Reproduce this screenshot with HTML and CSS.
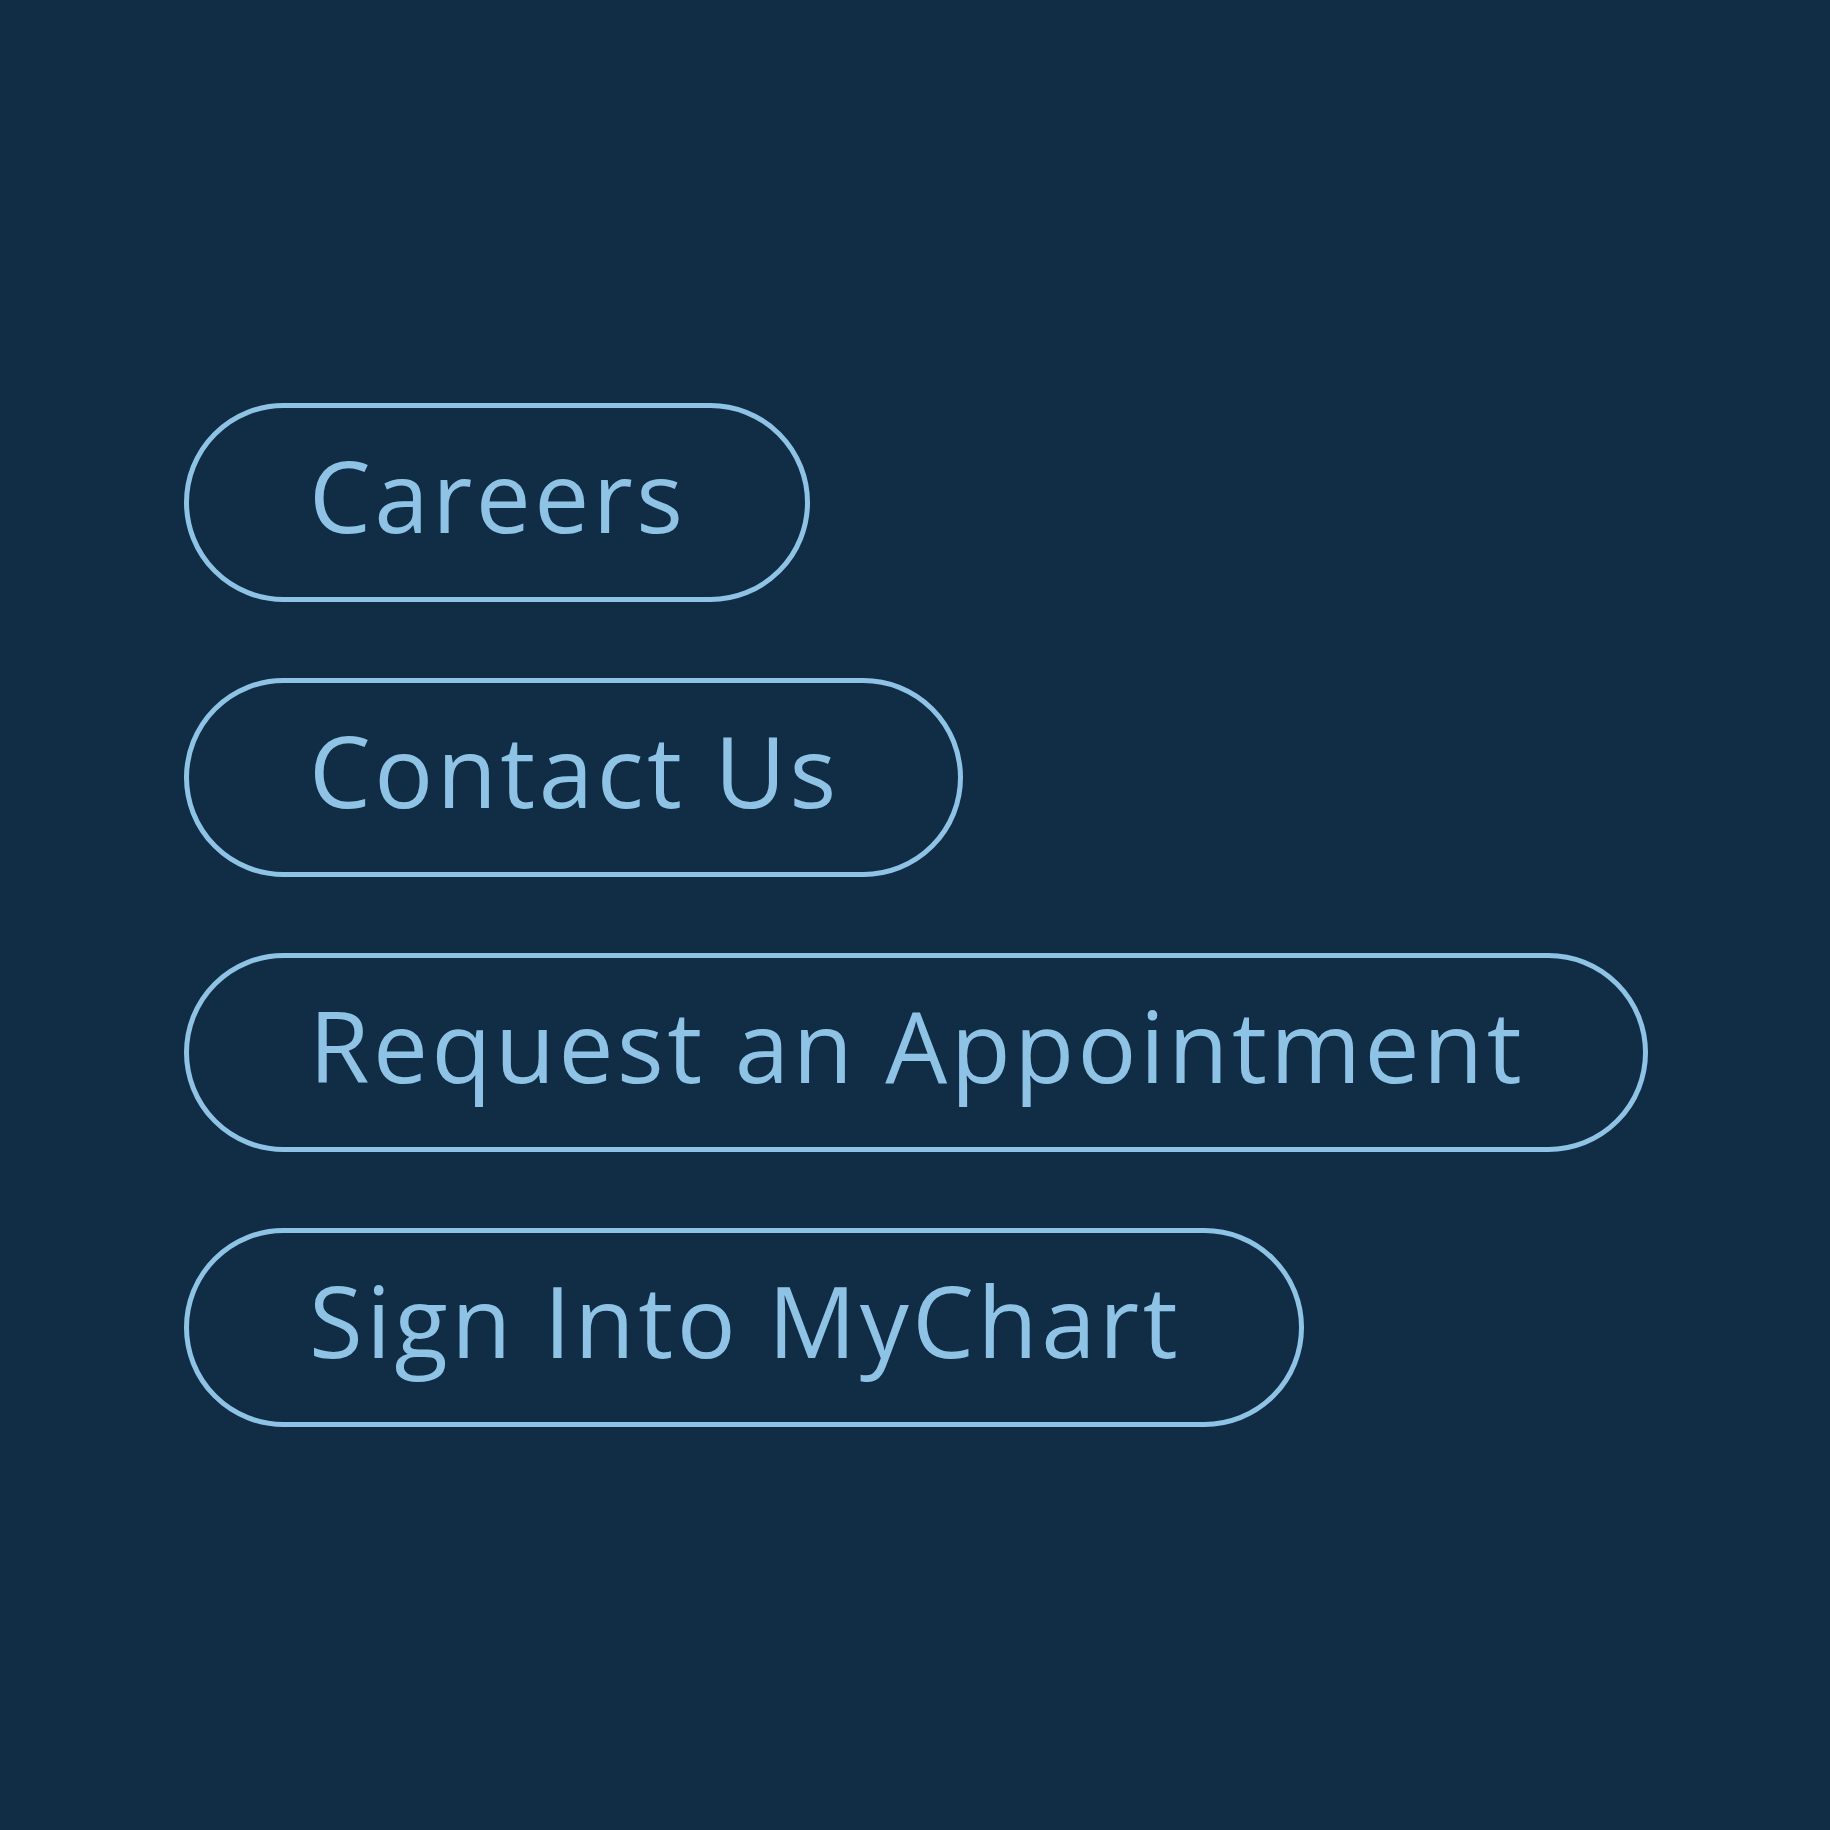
FILE: index.html
```html
<!DOCTYPE html>
<html lang="en">
  <head>
    <meta charset="UTF-8">
    <meta name="viewport" content="width=device-width, initial-scale=1.0">
    <title>Quick Links</title>
    <link rel="stylesheet" href="styles.css">
  </head>
  <body>
    <div class="app">
      <nav class="pill-list">
        <a class="pill-btn" href="#">Careers</a>
        <a class="pill-btn" href="#">Contact Us</a>
        <a class="pill-btn" href="#">Request an Appointment</a>
        <a class="pill-btn" href="#">Sign Into MyChart</a>
      </nav>
    </div>
  </body>
</html>
```

FILE: styles.css
```css
* {
  margin: 0;
  padding: 0;
  box-sizing: border-box;
}
html, body {
  height: 100%;
  background-color: #112d46;
}
.app {
  min-height: 100%;
  padding: 403px 0 0 184px;
  font-family: "Open Sans", Lato, sans-serif;
}
.pill-list {
  display: flex;
  flex-direction: column;
  align-items: flex-start;
  gap: 76px;
}
.pill-btn {
  display: flex;
  align-items: center;
  height: 199px;
  padding: 0 118px 16px 120px;
  border: 5px solid #8fc3e6;
  border-radius: 100px;
  color: #8fc3e6;
  font-size: 98px;
  font-weight: 500;
  letter-spacing: 3.5px;
  line-height: 1;
  text-decoration: none;
  white-space: nowrap;
}
```
